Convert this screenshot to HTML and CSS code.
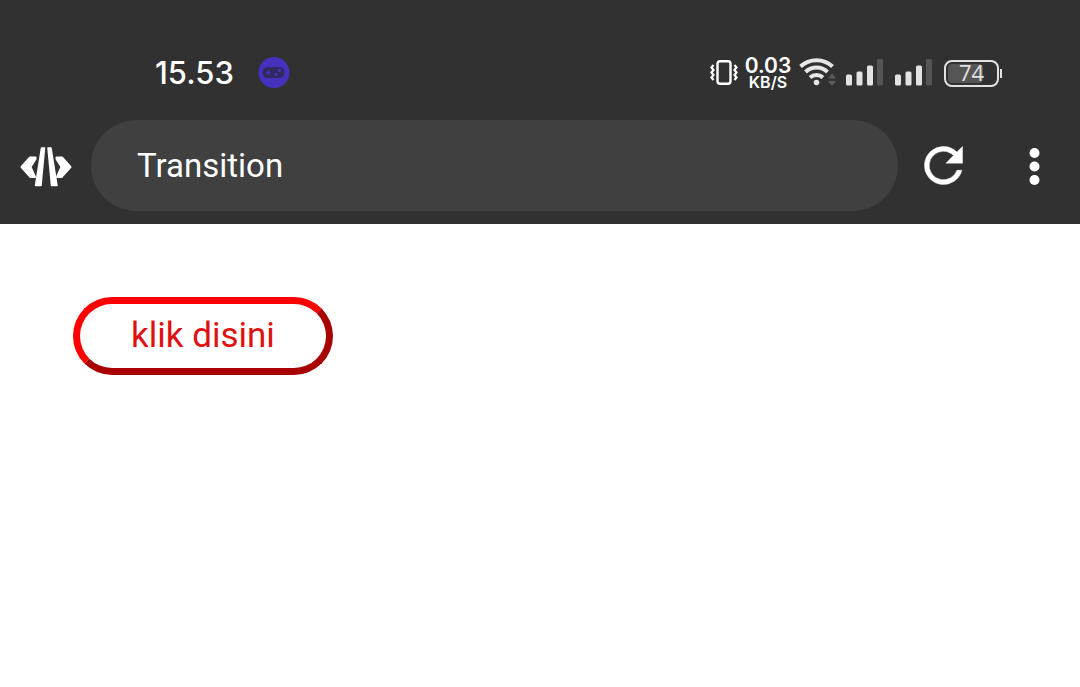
FILE: index.html
```html
<!DOCTYPE html>
<html lang="id">
<head>
<meta charset="utf-8">
<meta name="viewport" content="width=device-width, initial-scale=1">
<title>Transition</title>
<link rel="stylesheet" href="styles.css">
</head>
<body>
<header class="header">
  <div class="status">
    <time class="clock">15.53</time>
    <svg class="game" width="32" height="32" viewBox="0 0 32 32" aria-hidden="true">
      <circle cx="16" cy="15.500" r="15.5" fill="#4431bd"/>
      <rect x="4.5" y="10" width="22" height="11" rx="5.5" fill="#30295f"/>
      <path d="M8 15.5h5M10.500 13v5" stroke="#4431bd" stroke-width="1.5"/>
      <circle cx="21.500" cy="13.500" r="1.700" fill="#4431bd"/>
      <circle cx="18" cy="17.500" r="1.700" fill="#4431bd"/>
    </svg>
    <div class="indicators">
      <svg width="28" height="28" viewBox="0 0 28 28" fill="none" stroke="#fff" aria-hidden="true">
        <rect x="7.500" y="2.200" width="13" height="22.600" rx="2.500" stroke-width="2.400"/>
        <path d="M3.500 6l-2 2.500 2 2.500-2 2.500 2 2.500-2 2.500 2 2.500M24.500 6l2 2.500-2 2.500 2 2.500-2 2.500 2 2.500-2 2.500" stroke-width="2.200"/>
      </svg>
      <div class="speed"><span class="rate">0.03</span><span class="unit">KB/S</span></div>
      <svg class="wifi" width="38" height="32" viewBox="0 0 38 32" fill="none" stroke="#e6e6e6" aria-hidden="true">
        <path d="M1.500 9.500a23.500 23.500 0 0 1 32 0M6.500 15a16 16 0 0 1 22 0M11 20.500a10 10 0 0 1 13 0" stroke-width="4"/>
        <circle cx="17.500" cy="25.500" r="2.800" fill="#e6e6e6" stroke="none"/>
        <path d="M29 21.500l4-5 4 5zM29 24l4 5 4-5z" fill="#5b5b5b" stroke="none"/>
      </svg>
      <svg class="signal" width="38" height="28" viewBox="0 0 38 28" fill="#e2e2e2" aria-hidden="true">
        <rect y="15.500" width="6" height="11" rx="1.500"/><rect x="10.500" y="12.500" width="6" height="14" rx="1.500"/><rect x="21" y="6.500" width="6" height="20" rx="1.500"/><rect x="31" width="6" height="26.500" rx="1.500" fill="#555"/>
      </svg>
      <svg class="signal" width="38" height="28" viewBox="0 0 38 28" fill="#e2e2e2" aria-hidden="true">
        <rect y="15.500" width="6" height="11" rx="1.500"/><rect x="10.500" y="12.500" width="6" height="14" rx="1.500"/><rect x="21" y="6.500" width="6" height="20" rx="1.500"/><rect x="31" width="6" height="26.500" rx="1.500" fill="#555"/>
      </svg>
      <div class="battery"><span class="level">74</span></div>
      <span class="tip"></span>
    </div>
  </div>
  <nav class="toolbar">
    <button class="icon-button code" type="button" aria-label="Kode">
      <svg width="54" height="42" viewBox="0 0 54 42" aria-hidden="true" fill="#fff" stroke="#fff" stroke-linejoin="round">
        <path d="M2.500 22L11 12.500h5.500v1.500L11.500 22l4.500 10h-4.500zM51.500 22L43 12.500h-5.500v1.500l5 8L38 32h4.500z" stroke-width="2"/>
        <path d="M22.500 3h3L22 40.500h-5.500zM29 3h3l6 37.500h-5.500z" stroke-width="1.500"/>
      </svg>
    </button>
    <input class="address" type="text" value="Transition" aria-label="Judul halaman">
    <button class="icon-button" type="button" aria-label="Muat ulang">
      <svg width="57" height="57" viewBox="0 0 24 24" fill="#fff" aria-hidden="true"><path d="M17.650 6.350A7.960 7.960 0 0 0 12 4a8 8 0 1 0 7.730 10h-2.080A6 6 0 1 1 12 6c1.660 0 3.140.69 4.220 1.780L13 11h7V4z" stroke="#fff" stroke-width=".2"/></svg>
    </button>
    <button class="icon-button" type="button" aria-label="Menu">
      <svg width="12" height="40" viewBox="0 0 12 40" fill="#fff" aria-hidden="true"><circle cx="5.500" cy="7" r="5"/><circle cx="5.500" cy="20.500" r="5"/><circle cx="5.500" cy="34" r="5"/></svg>
    </button>
  </nav>
</header>
<main class="page">
  <button class="action" type="button">klik disini</button>
</main>
</body>
</html>
```

FILE: styles.css
```css
* { box-sizing: border-box; }

body {
  margin: 0;
  background: #fff;
  font-family: Roboto, "Noto Sans", sans-serif;
}

.header {
  padding: 26px 0 13px;
  background: #313131;
  color: #fff;
}

.status {
  display: flex;
  align-items: center;
  height: 94px;
  padding: 0 78px 0 155px;
}

.clock {
  font: 500 31px/40px Inter, sans-serif;
}

.game { margin-left: 24px; }

.indicators {
  display: flex;
  align-items: center;
  margin-left: auto;
}

.speed {
  display: flex;
  flex-direction: column;
  align-items: center;
  width: 46px;
  margin: 0 8px 0 7px;
  font-family: Inter, sans-serif;
  font-weight: 600;
}

.rate { font-size: 21px; line-height: 17px; }
.unit { font-size: 16px; line-height: 16px; }

.wifi { margin-right: 9px; }
.signal { margin-right: 11px; }

.battery {
  width: 55px;
  height: 27px;
  padding: 2px;
  border: 2px solid #e2e2e2;
  border-radius: 8px;
}

.level {
  display: block;
  width: 35px;
  height: 19px;
  padding-left: 11px;
  border-radius: 4px;
  background: #555;
  color: #e2e2e2;
  font: 500 22px/17px "Open Sans", sans-serif;
}

.tip {
  width: 2px;
  height: 9px;
  margin-left: 1px;
  background: #e2e2e2;
}

.toolbar {
  display: flex;
  align-items: center;
}

.icon-button {
  display: flex;
  justify-content: center;
  align-items: center;
  flex: none;
  width: 91px;
  height: 91px;
  padding: 0;
  border: 0;
  background: none;
}

.address {
  flex: 1;
  min-width: 0;
  height: 91px;
  padding: 0 46px;
  border: 0;
  border-radius: 46px;
  background: #404040;
  color: #fff;
  font: 33px/40px Roboto, sans-serif;
}

.page { padding: 73px; }

.action {
  height: 78px;
  padding: 0 51px;
  border: 7px solid;
  border-color: #f00 #a80000 #a80000 #f00;
  border-radius: 39px;
  background: #fff;
  color: #e01010;
  font: 35px/40px Roboto, sans-serif;
}
```
